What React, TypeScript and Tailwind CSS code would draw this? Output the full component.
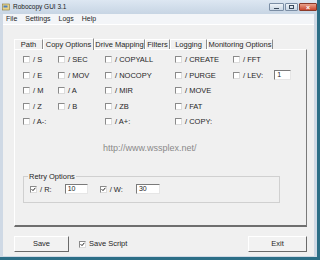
import React from 'react';

function Check({ checked = false }: { checked?: boolean }) {
  return (
    <span className="relative inline-block w-[7px] h-[7px] shrink-0 bg-white border border-t-[#8a8a8a] border-l-[#8a8a8a] border-r-[#dcdcdc] border-b-[#dcdcdc]">
      {checked && (
        <svg viewBox="0 0 5 5" className="absolute left-0 top-0 w-[5px] h-[5px]">
          <path d="M0.6 2.2 L2 3.6 L4.4 0.8" fill="none" stroke="#222" strokeWidth="1" />
        </svg>
      )}
    </span>
  );
}

function Opt({ label, checked }: { label: string; checked?: boolean }) {
  return (
    <div className="flex items-center gap-[3px] whitespace-nowrap">
      <Check checked={checked} />
      <span>{label}</span>
    </div>
  );
}

function Field({ value, w }: { value: string; w: string }) {
  return (
    <div className={`${w} h-[10px] bg-white border border-t-[#7a7a7a] border-l-[#7a7a7a] border-r-[#e6e6e6] border-b-[#e6e6e6] pl-[2px] leading-[8px] text-[7px]`}>
      {value}
    </div>
  );
}

const rows: (string | null)[][] = [
  ['/ S', '/ SEC', '/ COPYALL', '/ CREATE', '/ FFT'],
  ['/ E', '/ MOV', '/ NOCOPY', '/ PURGE', 'LEV'],
  ['/ M', '/ A', '/ MIR', '/ MOVE', null],
  ['/ Z', '/ B', '/ ZB', '/ FAT', null],
  ['/ A-:', null, '/ A+:', '/ COPY:', null],
];

const tabs = [
  { label: 'Path', w: 'w-[29px]' },
  { label: 'Copy Options', w: 'w-[51px]' },
  { label: 'Drive Mapping', w: 'w-[51px]' },
  { label: 'Filters', w: 'w-[25px]' },
  { label: 'Logging', w: 'w-[37px]' },
  { label: 'Monitoring Options', w: 'w-[66px]' },
];

export default function App() {
  return (
    <div className="w-[320px] h-[260px] flex flex-col bg-[#cfd9e5] border-r-[3px] border-b-[3px] border-[#2c6e86] font-['Liberation_Sans',Arial,sans-serif] text-[7.5px] text-[#262626] overflow-hidden">
      {/* title bar */}
      <div className="h-[14px] flex items-center pl-[2px] bg-gradient-to-b from-[#dde7f2] to-[#c7d5e4]">
        <svg viewBox="0 0 8 8" className="w-[8px] h-[8px] mr-[3px]">
          <rect x="0.5" y="1" width="7" height="6" fill="#e8d48a" stroke="#8a7a3a" strokeWidth="0.6" />
          <rect x="1.5" y="2.5" width="4" height="2" fill="#4a7fc0" />
        </svg>
        <span className="text-[6.5px] text-[#1a1a1a]">Robocopy GUI 3.1</span>
        <div className="ml-auto flex items-center gap-[1px]">
          <div className="w-[15px] h-[8px] rounded-[1px] border border-[#7b8ea5] bg-gradient-to-b from-[#eef3f8] to-[#c9d6e4] flex items-end justify-center pb-[1px]">
            <div className="w-[5px] h-[1px] bg-[#3a4a5c]" />
          </div>
          <div className="w-[13px] h-[8px] rounded-[1px] border border-[#7b8ea5] bg-gradient-to-b from-[#eef3f8] to-[#c9d6e4] flex items-center justify-center">
            <div className="w-[5px] h-[4px] border border-[#3a4a5c]" />
          </div>
          <div className="w-[18px] h-[8px] rounded-[1px] border border-[#8a3a2a] bg-gradient-to-b from-[#e9a08a] to-[#c8452c] flex items-center justify-center text-white text-[7px] leading-none font-bold">
            ×
          </div>
        </div>
      </div>

      {/* client */}
      <div className="flex-1 flex flex-col ml-[3px] mr-[3px] mb-[1px] bg-[#f0f0f0]">
        {/* menu bar */}
        <div className="h-[11px] flex items-center gap-[8px] pl-[3px] bg-[#f3f5f8] border-b border-white text-[7px]">
          <span>File</span>
          <span>Settings</span>
          <span>Logs</span>
          <span>Help</span>
        </div>

        <div className="flex-1 flex flex-col pl-[11px] pr-[7px] pt-[12px]">
          {/* tabs */}
          <div className="h-[12px] flex items-end">
            {tabs.map((t) => {
              const sel = t.label === 'Copy Options';
              return (
                <div
                  key={t.label}
                  className={`${t.w} flex items-center justify-center whitespace-nowrap border-t border-l border-white border-r border-r-[#8c8c8c] ${
                    sel ? 'h-[12px] bg-[#f0f0f0] relative top-[1px]' : 'h-[10px]'
                  }`}
                >
                  {t.label}
                </div>
              );
            })}
          </div>

          {/* panel */}
          <div className="h-[178px] flex flex-col border border-t-white border-l-white border-r-[#7a7a7a] border-b-[#6e6e6e] border-b-2">
            <div className="grid grid-cols-[35px_47px_70px_58px_1fr] pl-[8px] pt-[2px]">
              {rows.map((r, ri) =>
                r.map((c, ci) => (
                  <div key={`${ri}-${ci}`} className="h-[15.5px] flex items-center">
                    {c === 'LEV' ? (
                      <div className="flex items-center">
                        <Opt label="/ LEV:" />
                        <div className="ml-[11px]">
                          <Field value="1" w="w-[17px]" />
                        </div>
                      </div>
                    ) : c ? (
                      <Opt label={c} />
                    ) : null}
                  </div>
                ))
              )}
            </div>

            <div className="mt-[12px] pl-[88px] text-[9px] leading-[13px] text-[#8a8a8a]">http://www.wssplex.net/</div>

            {/* retry options */}
            <div className="relative mt-[21px] ml-[8px] w-[257px] h-[27px] border border-[#d0d0d0]">
              <span className="absolute left-[4px] top-[-6px] px-[1px] bg-[#f0f0f0]">Retry Options</span>
              <div className="flex items-center pl-[6px] pt-[7px]">
                <Opt label="/ R:" checked />
                <div className="ml-[13px]">
                  <Field value="10" w="w-[23px]" />
                </div>
                <div className="ml-[12px]">
                  <Opt label="/ W:" checked />
                </div>
                <div className="ml-[13px]">
                  <Field value="30" w="w-[24px]" />
                </div>
              </div>
            </div>
          </div>

          {/* bottom buttons */}
          <div className="mt-[9px] flex items-center">
            <div className="w-[55px] h-[16px] flex items-center justify-center bg-[#f2f2f2] border border-t-white border-l-white border-r-[#6a6a6a] border-b-[#6a6a6a]">
              Save
            </div>
            <div className="ml-[10px]">
              <Opt label="Save Script" checked />
            </div>
            <div className="ml-auto w-[59px] h-[16px] flex items-center justify-center bg-[#f2f2f2] border border-t-white border-l-white border-r-[#6a6a6a] border-b-[#6a6a6a]">
              Exit
            </div>
          </div>
        </div>
      </div>
    </div>
  );
}
